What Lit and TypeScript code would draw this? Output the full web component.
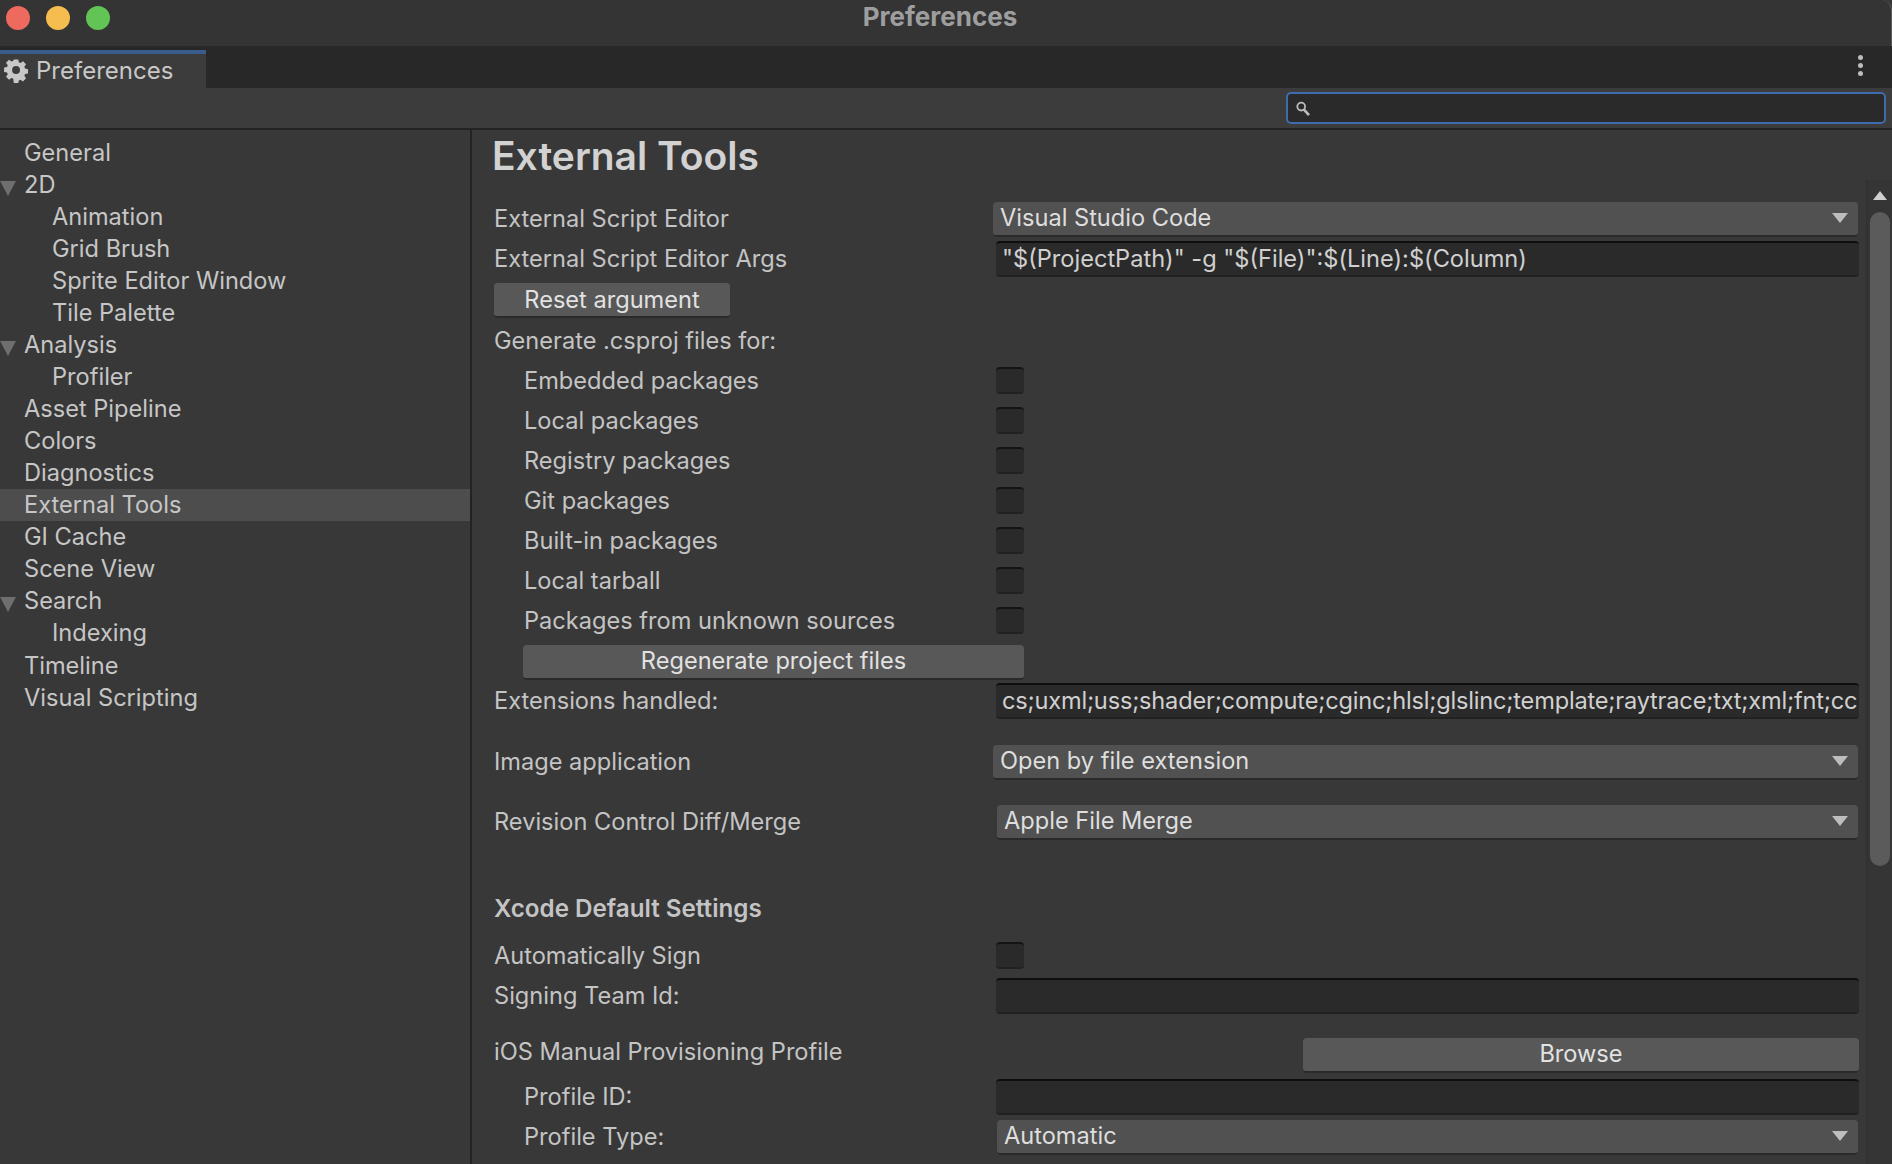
import { LitElement, html, css } from "lit";
import { customElement } from "lit/decorators.js";

const tree: [string, number, boolean][] = [
  ["General", 0, false], ["2D", 0, true], ["Animation", 1, false], ["Grid Brush", 1, false],
  ["Sprite Editor Window", 1, false], ["Tile Palette", 1, false], ["Analysis", 0, true], ["Profiler", 1, false],
  ["Asset Pipeline", 0, false], ["Colors", 0, false], ["Diagnostics", 0, false], ["External Tools", 0, false],
  ["GI Cache", 0, false], ["Scene View", 0, false], ["Search", 0, true], ["Indexing", 1, false],
  ["Timeline", 0, false], ["Visual Scripting", 0, false],
];
const pkgs = ["Embedded packages", "Local packages", "Registry packages", "Git packages", "Built-in packages", "Local tarball", "Packages from unknown sources"];
const EXT = "cs;uxml;uss;shader;compute;cginc;hlsl;glslinc;template;raytrace;txt;xml;fnt;cc";

@customElement("app-root")
export class AppRoot extends LitElement {
  static styles = css`
    :host { display: block; width: 1892px; height: 1164px; overflow: hidden; background: #383838; color: #c4c4c4;
      font-family: Inter, "Liberation Sans", sans-serif; font-size: 23.6px; line-height: 32px; letter-spacing: 0; }
    * { box-sizing: border-box; }
    .titlebar { height: 46px; background: #343434; display: flex; align-items: center; position: relative; padding-left: 6px; gap: 16px; border-top-right-radius: 10px; border-right: 1px solid #5a5a5a; }
    .light { width: 24px; height: 24px; border-radius: 50%; margin-top: -10px; }
    .red { background: #ee6a5f; } .yellow { background: #f5bd4f; } .green { background: #61c454; }
    .wintitle { position: absolute; left: 0; right: 11px; top: 0; text-align: center; font-size: 26px; line-height: 34px; font-weight: 700; color: #9e9e9e; }
    .tabbar { height: 42px; background: #282828; display: flex; justify-content: space-between; }
    .tab { width: 206px; margin-top: 4px; height: 38px; background: #3c3c3c; border-top: 4px solid #3a5c8a; display: flex; align-items: center; gap: 8px; padding-left: 4px; color: #c8c8c8; font-size: 24px; }
    .tab svg { display: block; flex: none; }
    .dots { width: 8px; margin: -3px 26px 0 0; display: flex; flex-direction: column; justify-content: center; gap: 3px; }
    .dots i { display: block; width: 5px; height: 5px; border-radius: 50%; background: #bdbdbd; }
    .toolbar { height: 42px; background: #3c3c3c; border-bottom: 2px solid #232323; display: flex; justify-content: flex-end; padding: 4px 6px 0 0; }
    .search { width: 600px; height: 32px; background: #2a2a2a; border: 2px solid #3f6cae; border-radius: 5px; display: flex; align-items: center; padding: 2px 0 0 8px; }
    .body { display: flex; height: 1034px; }
    .side { width: 472px; border-right: 2px solid #232323; padding-top: 7px; flex: none; }
    .node { height: 32.04px; display: flex; align-items: center; position: relative; padding-left: 24px; color: #c6c6c6; }
    .node.child { padding-left: 52px; }
    .node.sel { background: #4d4d4d; }
    .arrow { position: absolute; left: 0; top: 12px; width: 0; height: 0; border-left: 8px solid transparent; border-right: 8px solid transparent; border-top: 15px solid #6e6e6e; }
    .main { flex: 1; padding: 0 7px 0 22px; min-width: 0; }
    h1 { margin: 0 0 0 -2px; font-size: 39px; font-weight: 600; line-height: 44px; height: 69px; padding-top: 4px; color: #d2d2d2; }
    .row { display: flex; align-items: center; height: 40px; }
    .row.ind > .lab { padding-left: 30px; }
    .lab { width: 502px; flex: none; white-space: nowrap; }
    .ctl { flex: 1; min-width: 0; }
    .popup { height: 35px; margin-left: -3px; border-radius: 4px; background: #515151; border-bottom: 2px solid #2a2a2a; display: flex; align-items: center; justify-content: space-between; padding: 0 10px 0 7px; color: #dedede; margin-right: 1px; }
    .popup.alt { margin-left: 1px; padding-left: 7px; }
    .popup .caret { width: 0; height: 0; border-left: 8px solid transparent; border-right: 8px solid transparent; border-top: 10px solid #bdbdbd; margin-right: 0; }
    .field { height: 36px; background: #2a2a2a; border-radius: 4px; border-top: 2px solid #0e0e0e; border-bottom: 2px solid #212121; padding: 0 3px 0 6px; color: #d0d0d0; white-space: nowrap; overflow: hidden; display: flex; align-items: center; }
    .field span { display: block; }
    .field .ext { letter-spacing: -0.19px; }
    .cb { width: 28px; height: 27px; margin-top: -2px; background: #2a2a2a; border-radius: 4px; border-top: 2px solid #141414; border-bottom: 2px solid #212121; }
    .btn { height: 35px; background: #585858; border-radius: 4px; border-bottom: 2px solid #2a2a2a; display: flex; align-items: center; justify-content: center; color: #e2e2e2; }
    .row-reset { height: 42px; }
    .b-reset { width: 236px; margin-top: 1px; }
    .b-regen { width: 501px; margin-left: 29px; margin-top: 2px; }
    .b-browse { width: 556px; margin-left: auto; }
    .row-image { margin-top: 21px; }
    .row-rev { margin-top: 20px; }
    .sec { font-weight: 600; font-size: 24.2px; color: #c4c4c4; margin-top: 47px; }
    .row-auto { margin-top: 7px; }
    .row-ios { margin-top: 17px; height: 44px; }
    .row-ios .lab { margin-top: -6px; }
    .scroll { width: 26px; flex: none; margin-top: 50px; background: #353535; border-left: 2px solid #323232; padding-left: 2px; display: flex; flex-direction: column; align-items: flex-start; }
    .up { width: 0; height: 0; border-left: 7px solid transparent; border-right: 7px solid transparent; border-bottom: 9px solid #d0d0d0; margin: 11px 0 0 3px; }
    .thumb { width: 20px; height: 654px; border-radius: 10px; background: #5b5b5b; margin-top: 12px; }
  `;

  private cbRow(t: string, ind = true) {
    return html`<div class="row ${ind ? "ind" : ""}"><div class="lab">${t}</div><div class="ctl"><div class="cb"></div></div></div>`;
  }

  render() {
    return html`
      <div class="titlebar">
        <div class="light red"></div><div class="light yellow"></div><div class="light green"></div>
        <div class="wintitle">Preferences</div>
      </div>
      <div class="tabbar">
        <div class="tab">
          <svg width="24" height="24" viewBox="0 0 24 24" aria-hidden="true"><path fill="#c8c8c8" fill-rule="evenodd" d="M9.6 0h4.8l.6 3.2 1.9.8 2.7-1.9 3.3 3.3-1.9 2.7.8 1.9 3.2.6v4.8l-3.2.6-.8 1.9 1.9 2.7-3.3 3.3-2.7-1.9-1.9.8-.6 3.2H9.6L9 21l-1.9-.8-2.7 1.9-3.3-3.3L3 16.1l-.8-1.9L-1 13.6V8.8l3.2-.6.8-1.9L1.1 3.6 4.4.3 7.1 2.2 9 1.4zM12 7.2a4.3 4.3 0 1 0 0 8.6 4.3 4.3 0 0 0 0-8.6z" transform="translate(1 0.4) scale(.92)"/></svg>
          <span>Preferences</span>
        </div>
        <div class="dots"><i></i><i></i><i></i></div>
      </div>
      <div class="toolbar">
        <div class="search">
          <svg width="14" height="16" viewBox="0 0 14 16" aria-hidden="true"><circle cx="5.2" cy="5.6" r="3.9" fill="none" stroke="#bdbdbd" stroke-width="1.8"/><path d="M8 8.6l5 5.6" stroke="#bdbdbd" stroke-width="2.6"/></svg>
        </div>
      </div>
      <div class="body">
        <div class="side">
          ${tree.map(([t, lvl, open]) => html`<div class="node ${lvl ? "child" : ""} ${t === "External Tools" ? "sel" : ""}">${open ? html`<div class="arrow"></div>` : ""}${t}</div>`)}
        </div>
        <div class="main">
          <h1>External Tools</h1>
          <div class="row"><div class="lab">External Script Editor</div><div class="ctl"><div class="popup"><span>Visual Studio Code</span><div class="caret"></div></div></div></div>
          <div class="row"><div class="lab">External Script Editor Args</div><div class="ctl"><div class="field"><span>"$(ProjectPath)" -g "$(File)":$(Line):$(Column)</span></div></div></div>
          <div class="row row-reset"><div class="btn b-reset">Reset argument</div></div>
          <div class="row"><div class="lab">Generate .csproj files for:</div></div>
          ${pkgs.map((p) => this.cbRow(p))}
          <div class="row"><div class="btn b-regen">Regenerate project files</div></div>
          <div class="row"><div class="lab">Extensions handled:</div><div class="ctl"><div class="field"><span class="ext">${EXT}</span></div></div></div>
          <div class="row row-image"><div class="lab">Image application</div><div class="ctl"><div class="popup"><span>Open by file extension</span><div class="caret"></div></div></div></div>
          <div class="row row-rev"><div class="lab">Revision Control Diff/Merge</div><div class="ctl"><div class="popup alt"><span>Apple File Merge</span><div class="caret"></div></div></div></div>
          <div class="row sec"><div class="lab">Xcode Default Settings</div></div>
          <div class="row row-auto"><div class="lab">Automatically Sign</div><div class="ctl"><div class="cb"></div></div></div>
          <div class="row"><div class="lab">Signing Team Id:</div><div class="ctl"><div class="field"></div></div></div>
          <div class="row row-ios"><div class="lab">iOS Manual Provisioning Profile</div><div class="btn b-browse">Browse</div></div>
          <div class="row ind"><div class="lab">Profile ID:</div><div class="ctl"><div class="field"></div></div></div>
          <div class="row ind"><div class="lab">Profile Type:</div><div class="ctl"><div class="popup alt"><span>Automatic</span><div class="caret"></div></div></div></div>
        </div>
        <div class="scroll"><div class="up"></div><div class="thumb"></div></div>
      </div>
    `;
  }
}
